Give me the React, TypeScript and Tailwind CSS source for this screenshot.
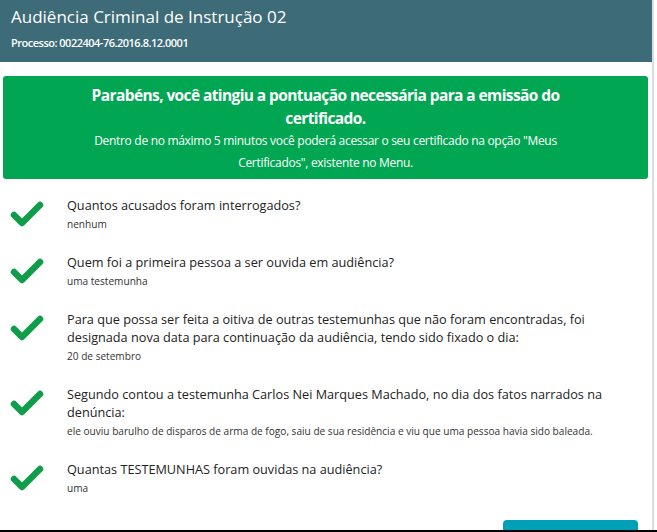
import React from "react";

const items = [
  { q: "Quantos acusados foram interrogados?", a: "nenhum" },
  { q: "Quem foi a primeira pessoa a ser ouvida em audiência?", a: "uma testemunha" },
  {
    q: "Para que possa ser feita a oitiva de outras testemunhas que não foram encontradas, foi designada nova data para continuação da audiência, tendo sido fixado o dia:",
    a: "20 de setembro",
  },
  {
    q: "Segundo contou a testemunha Carlos Nei Marques Machado, no dia dos fatos narrados na denúncia:",
    a: "ele ouviu barulho de disparos de arma de fogo, saiu de sua residência e viu que uma pessoa havia sido baleada.",
  },
  { q: "Quantas TESTEMUNHAS foram ouvidas na audiência?", a: "uma" },
];

function Check() {
  return (
    <svg width="36" height="30" viewBox="0 0 36 30" className="shrink-0">
      <polyline
        points="5,16 13,24 31,6"
        fill="none"
        stroke="#0f9d4a"
        strokeWidth="6.5"
        strokeLinecap="round"
        strokeLinejoin="round"
      />
    </svg>
  );
}

export default function App() {
  return (
    <div className="w-[657px] h-[532px] bg-white flex flex-col overflow-hidden font-['Open_Sans',sans-serif]">
      <div className="flex flex-1 min-h-0">
        <div className="w-[654px] border-r-2 border-[#dddddd] flex flex-col">
          {/* header */}
          <div className="h-[62px] w-[652px] bg-[#3e6b78] px-[11px] pt-[4px] text-white">
            <h1 className="text-[17px] font-medium leading-[26px]">Audiência Criminal de Instrução 02</h1>
            <p className="text-[11px] font-semibold tracking-[-0.5px] leading-[18px] mt-[4px]">
              Processo: 0022404-76.2016.8.12.0001
            </p>
          </div>

          {/* alerta */}
          <div className="mx-[3px] mt-[14px] h-[103px] w-[645px] rounded-[3px] bg-[#00a651] text-white text-center pt-[8px]">
            <p className="text-[15.5px] font-bold tracking-[-0.6px] leading-[23px] mx-auto max-w-[470px]">
              Parabéns, você atingiu a pontuação necessária para a emissão do certificado.
            </p>
            <p className="text-[12px] tracking-[-0.3px] leading-[22px] mx-auto max-w-[480px]">
              Dentro de no máximo 5 minutos você poderá acessar o seu certificado na opção "Meus Certificados", existente no Menu.
            </p>
          </div>

          {/* perguntas */}
          <div className="flex flex-col gap-[21px] mt-[17px]">
            {items.map((it) => (
              <div key={it.q} className="flex">
                <div className="w-[67px] pl-[9px] pt-[3px]">
                  <Check />
                </div>
                <div className="flex-1 pr-[40px]">
                  <p className="text-[12.7px] leading-[18px] text-[#222]">{it.q}</p>
                  <p className="text-[10.1px] leading-[16px] text-[#333] mt-[2px]">{it.a}</p>
                </div>
              </div>
            ))}
          </div>

          <div className="flex-1" />
          <div className="flex justify-end pr-[14px]">
            <div className="w-[135px] h-[10px] rounded-t-[4px] bg-[#00a0b6]" />
          </div>
        </div>
      </div>
      <div className="h-[2px] bg-black" />
    </div>
  );
}
